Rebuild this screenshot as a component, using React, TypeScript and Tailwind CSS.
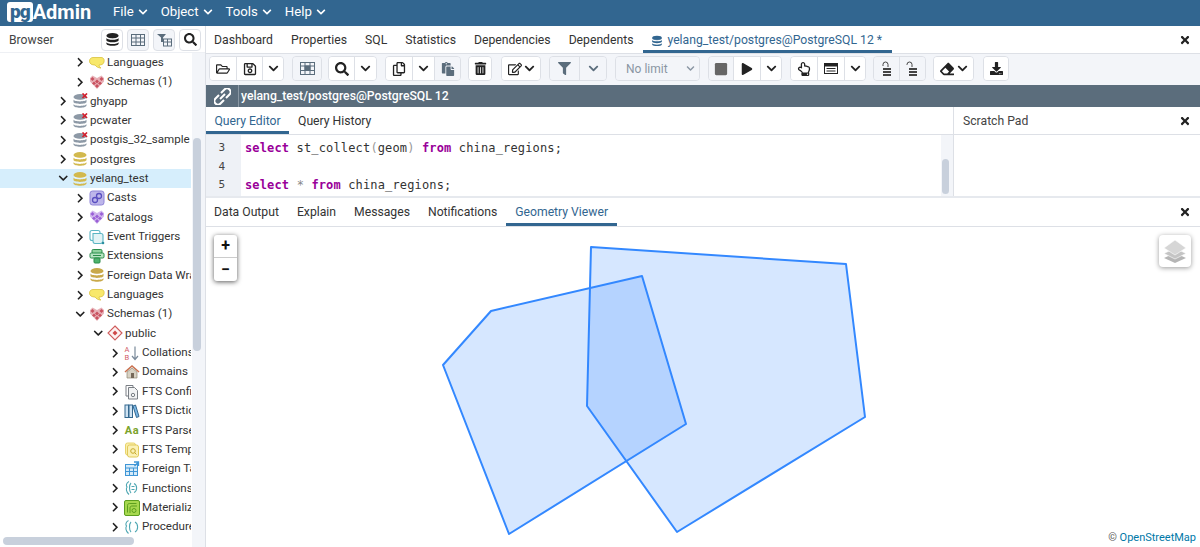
import React from 'react';
import {
    FaChevronDown, FaChevronRight, FaRegFolderOpen, FaRegSave, FaSearch, FaRegCopy, FaPaste, FaTrashAlt,
    FaRegEdit, FaFilter, FaStop, FaPlay, FaRegHandPointUp, FaEraser, FaDownload, FaTimes,
} from 'react-icons/fa';

const DbIcon = ({ color = '#c9b458', line = '#fff', off = false, size = 16 }: { color?: string; line?: string; off?: boolean; size?: number }) => (
    <svg width={size} height={size} viewBox="0 0 16 16">
        <ellipse cx="8" cy="4" rx="6.5" ry="3" fill={color} />
        <path d="M1.5 6.5C2 9 14 9 14.5 6.5V9C14 11.5 2 11.5 1.5 9Z" fill={color} />
        <path d="M1.5 11C2 13.5 14 13.5 14.5 11V12.5C14 15.5 2 15.5 1.5 12.5Z" fill={color} />
        <path d="M2 6C4 7.5 12 7.5 14 6" stroke={line} fill="none" strokeWidth="0.5" />
        {off && <path d="M10.5 0.5L15 5M15 0.5L10.5 5" stroke="#d3212f" strokeWidth="1.7" />}
    </svg>
);

const HeartIcon = ({ color }: { color: string }) => (
    <svg width="16" height="16" viewBox="0 0 16 16">
        <path d="M8 15L1 7.5 1 4 3.5 1.5 8 4 12.5 1.5 15 4 15 7.5Z" fill={color} opacity="0.45" />
        <path d="M3.5 3L5.5 5 3.5 7 1.5 5ZM12.5 3L14.5 5 12.5 7 10.5 5ZM8 5.5L10 7.5 8 9.5 6 7.5ZM5 7.5L7 9.5 5 11 3 9.5ZM11 7.5L13 9.5 11 11 9 9.5ZM8 10L10 12 8 14 6 12Z" fill={color} />
    </svg>
);

const Icons: Record<string, React.ReactNode> = {
    lang: (
        <svg width="16" height="16" viewBox="0 0 16 16">
            <path d="M4 2.5H12C15 2.5 15.5 5 15 7 14.5 9.5 12 10 10 10 10 11 11 12.5 12 13 9 13 7 11.5 6 10 3 10 .5 9 .5 6 .5 4 2 2.5 4 2.5Z" fill="#f8e86b" stroke="#d9c23c" strokeWidth="0.8" />
        </svg>
    ),
    schema: <HeartIcon color="#c9515f" />,
    catalog: <HeartIcon color="#9a5fd6" />,
    casts: (
        <svg width="16" height="16" viewBox="0 0 16 16">
            <rect x="1" y="1" width="14" height="14" rx="2.5" fill="#bdb6ea" stroke="#8f84d8" />
            <circle cx="6" cy="10" r="2.5" fill="none" stroke="#5a4fc0" strokeWidth="1.3" />
            <circle cx="10" cy="6" r="2.5" fill="none" stroke="#5a4fc0" strokeWidth="1.3" />
        </svg>
    ),
    trigger: (
        <svg width="16" height="16" viewBox="0 0 16 16" fill="none" stroke="#5cb6c4" strokeWidth="1.1">
            <rect x="1" y="1.5" width="10" height="10" rx="2" />
            <path d="M4 4.5H12C13.5 4.5 14 5.5 14 6.5V12C14 13.5 13 14.5 11.5 14.5H6C4.5 14.5 4 13.5 4 12Z" fill="#e2f3f5" />
            <circle cx="14" cy="14" r="1.3" fill="#2c8fa0" stroke="none" />
        </svg>
    ),
    ext: (
        <svg width="16" height="16" viewBox="0 0 16 16">
            <rect x="3" y="1.5" width="10" height="4" rx="1.2" fill="#8fd19e" stroke="#2a8c4a" />
            <rect x="1" y="5" width="14" height="5" rx="1.2" fill="#b7e4c2" stroke="#2a8c4a" />
            <rect x="5" y="10" width="6" height="5" rx="1" fill="#4fb36d" stroke="#2a8c4a" />
            <path d="M4 7.5H12" stroke="#2a8c4a" />
        </svg>
    ),
    fdw: <DbIcon color="#c9a94a" />,
    pub: (
        <svg width="16" height="16" viewBox="0 0 16 16">
            <path d="M8 1L15 8 8 15 1 8Z" fill="#fdf1f1" stroke="#cf5b5b" strokeWidth="1.1" />
            <path d="M8 5.5L10.5 8 8 10.5 5.5 8Z" fill="#cf4848" />
        </svg>
    ),
    coll: (
        <svg width="16" height="16" viewBox="0 0 16 16" fill="none">
            <text x="0.5" y="7" fontSize="7.5" fontFamily="Roboto, sans-serif" fill="#d1606a">A</text>
            <text x="0.5" y="15" fontSize="7.5" fontFamily="Roboto, sans-serif" fill="#d1606a">B</text>
            <path d="M11 1.5V14M8 11L11 14.5 14 11" stroke="#7a8a9a" strokeWidth="1.2" />
        </svg>
    ),
    domain: (
        <svg width="16" height="16" viewBox="0 0 16 16">
            <path d="M1 8L8 2 15 8" fill="none" stroke="#c9704e" strokeWidth="1.6" />
            <path d="M3 8L8 4 13 8V14H3Z" fill="#d8d2c4" stroke="#8f8672" strokeWidth="0.7" />
            <rect x="7" y="9" width="3" height="5" fill="#76695a" />
        </svg>
    ),
    ftsconf: (
        <svg width="16" height="16" viewBox="0 0 16 16" fill="none" stroke="#7a7f85">
            <path d="M2 1.5H9V3" />
            <path d="M2 1.5V12H4" />
            <path d="M4.5 3.5H10.5L13.5 6.5V15H4.5Z" fill="#f1f2f3" />
            <circle cx="9" cy="11" r="1.7" />
        </svg>
    ),
    ftsdict: (
        <svg width="16" height="16" viewBox="0 0 16 16">
            <rect x="1" y="2" width="3.5" height="12.5" fill="#cfe3f3" stroke="#34688f" />
            <rect x="5" y="2" width="3.5" height="12.5" fill="#cfe3f3" stroke="#34688f" />
            <path d="M9 3L11.5 2 15 13.5 12.5 14.5Z" fill="#7cb8e6" stroke="#34688f" />
        </svg>
    ),
    ftsparse: <span className="text-[11px] font-bold leading-none text-[#7ba32b] whitespace-nowrap tracking-[0.5px]">Aa</span>,
    ftstemp: (
        <svg width="16" height="16" viewBox="0 0 16 16" fill="none">
            <rect x="1.5" y="1" width="10" height="12" rx="2" fill="#fbeeaa" stroke="#e8d46c" />
            <rect x="3.5" y="3" width="11" height="12" rx="2" fill="#fbf1b5" stroke="#e0c95a" />
            <circle cx="9" cy="9" r="2.3" stroke="#c6a92c" />
            <path d="M10.7 10.7L12.5 12.5" stroke="#c6a92c" />
        </svg>
    ),
    foreign: (
        <svg width="16" height="16" viewBox="0 0 16 16" fill="none" stroke="#3f96d6">
            <rect x="1.5" y="3.5" width="12" height="11" fill="#d6ebf9" />
            <path d="M1.5 7H13.5M1.5 10.5H13.5M5.5 7V14.5M9.5 7V14.5" />
            <path d="M10 1L14.5 1V5M14.5 1L10.5 5" strokeWidth="1.3" />
        </svg>
    ),
    func: (
        <svg width="16" height="16" viewBox="0 0 16 16" fill="none" stroke="#4fa7b3" strokeWidth="1.1">
            <path d="M5 1.5C2 3 2 6 3 7 2 8.5 2 12 5 14.5" />
            <path d="M7 3C5 5 5 11 7 13" />
            <path d="M10 3.5C13.5 5 13.5 11 10 12.5" />
            <path d="M7.5 6.5H10.5M7.5 9.5H10.5" />
        </svg>
    ),
    mat: (
        <svg width="16" height="16" viewBox="0 0 16 16" fill="none" stroke="#5d9e1f">
            <rect x="0.5" y="0.5" width="15" height="15" rx="1.5" fill="#a7d84e" />
            <path d="M3.5 12.5V5.5C3.5 4 4.5 3.5 5.5 3.5H12.5" />
            <path d="M6 13V8C6 6.5 7 6 8 6H13" />
            <circle cx="10" cy="10.5" r="2" />
        </svg>
    ),
    proc: (
        <svg width="16" height="16" viewBox="0 0 16 16" fill="none" stroke="#4fa7b3" strokeWidth="1.1">
            <path d="M4.5 1.5C1.5 3 1.5 6 2.5 7 1.5 8.5 1.5 12 4.5 14.5" />
            <path d="M7 3C5 5 5 11 7 13" />
            <path d="M11 3C14.5 5 14.5 11 11 13" />
        </svg>
    ),
};

type TreeRow = { label: string; indent: number; icon: React.ReactNode; open?: boolean; selected?: boolean };

const dbOff = <DbIcon color="#8d99a6" off />;
const db = <DbIcon color="#d2b94e" />;

const treeRows: TreeRow[] = [
    { label: 'Languages', indent: 73, icon: Icons.lang },
    { label: 'Schemas (1)', indent: 73, icon: Icons.schema },
    { label: 'ghyapp', indent: 56, icon: dbOff },
    { label: 'pcwater', indent: 56, icon: dbOff },
    { label: 'postgis_32_sample', indent: 56, icon: dbOff },
    { label: 'postgres', indent: 56, icon: db },
    { label: 'yelang_test', indent: 56, icon: db, open: true, selected: true },
    { label: 'Casts', indent: 73, icon: Icons.casts },
    { label: 'Catalogs', indent: 73, icon: Icons.catalog },
    { label: 'Event Triggers', indent: 73, icon: Icons.trigger },
    { label: 'Extensions', indent: 73, icon: Icons.ext },
    { label: 'Foreign Data Wrappers', indent: 73, icon: Icons.fdw },
    { label: 'Languages', indent: 73, icon: Icons.lang },
    { label: 'Schemas (1)', indent: 73, icon: Icons.schema, open: true },
    { label: 'public', indent: 91, icon: Icons.pub, open: true },
    { label: 'Collations', indent: 108, icon: Icons.coll },
    { label: 'Domains', indent: 108, icon: Icons.domain },
    { label: 'FTS Configurations', indent: 108, icon: Icons.ftsconf },
    { label: 'FTS Dictionaries', indent: 108, icon: Icons.ftsdict },
    { label: 'FTS Parsers', indent: 108, icon: Icons.ftsparse },
    { label: 'FTS Templates', indent: 108, icon: Icons.ftstemp },
    { label: 'Foreign Tables', indent: 108, icon: Icons.foreign },
    { label: 'Functions', indent: 108, icon: Icons.func },
    { label: 'Materialized Views', indent: 108, icon: Icons.mat },
    { label: 'Procedures', indent: 108, icon: Icons.proc },
];

const Tool = ({ w, children, off, last }: { w: number; children: React.ReactNode; off?: boolean; last?: boolean }) => (
    <div
        style={{ width: w }}
        className={`flex h-full items-center justify-center text-[14px] ${last ? '' : 'border-r border-[#dde0e6]'} ${off ? 'bg-[#f3f5f9] text-[#5b6d7c]' : 'bg-white text-[#222]'}`}
    >
        {children}
    </div>
);

const Group = ({ children, ml }: { children: React.ReactNode; ml: number }) => (
    <div style={{ marginLeft: ml }} className="flex h-[25px] shrink-0 overflow-hidden rounded-[4px] border border-[#dde0e6]">
        {children}
    </div>
);

const Chev = () => <FaChevronDown className="text-[11px]" />;

const BrowserBtn = ({ children, active }: { children: React.ReactNode; active?: boolean }) => (
    <div className={`flex h-[22px] w-[22px] items-center justify-center rounded-[4px] border border-[#dde0e6] ${active ? 'bg-white text-[#222]' : 'bg-[#f3f5f9] text-[#5b6d7c]'}`}>
        {children}
    </div>
);

const Kw = ({ children }: { children: React.ReactNode }) => <span className="font-bold text-[#990099]">{children}</span>;

export default function App() {
    return (
        <div className="flex h-[547px] w-[1200px] flex-col overflow-hidden bg-white font-['Roboto',sans-serif] text-[12.2px] text-[#222]">
            {/* Top menu */}
            <div className="flex h-[26px] shrink-0 items-center bg-[#326690] pb-[2px] text-[13.2px] text-white">
                <div className="ml-[7px] flex w-[106px] items-center">
                    <span className="rounded-[3px] bg-white px-[3px] text-[19px] font-black leading-[20px] tracking-[-1px] text-[#326690]">pg</span>
                    <span className="text-[20px] font-bold leading-none">Admin</span>
                </div>
                <div className="flex items-center gap-[4px]">File <FaChevronDown className="text-[10px]" /></div>
                <div className="ml-[13px] flex items-center gap-[4px]">Object <FaChevronDown className="text-[10px]" /></div>
                <div className="ml-[13px] flex items-center gap-[4px]">Tools <FaChevronDown className="text-[10px]" /></div>
                <div className="ml-[13px] flex items-center gap-[4px]">Help <FaChevronDown className="text-[10px]" /></div>
            </div>

            <div className="flex min-h-0 flex-1">
                {/* Browser panel */}
                <div className="flex w-[206px] shrink-0 flex-col border-r border-[#dde0e6]">
                    <div className="flex h-[27px] shrink-0 items-center border-b border-[#eef0f4] pl-[9px] pr-[4px]">
                        <span className="flex-1 pt-[2px] text-[#444]">Browser</span>
                        <div className="flex gap-[4px] pt-[1px]">
                            <BrowserBtn active><DbIcon color="#222" size={15} /></BrowserBtn>
                            <BrowserBtn>
                                <svg width="14" height="12" viewBox="0 0 14 12" fill="none" stroke="#5b6d7c"><rect x=".5" y=".5" width="13" height="11" /><path d="M.5 4H13.5M.5 8H13.5M5 .5V11.5M9.5 .5V11.5" /></svg>
                            </BrowserBtn>
                            <BrowserBtn>
                                <svg width="15" height="14" viewBox="0 0 15 14" fill="#5b6d7c"><path d="M0 1H9L6 4.5V9H4V4.5Z" /><rect x="6.5" y="6" width="8" height="7" fill="none" stroke="#5b6d7c" /><path d="M6.5 9H14.5M10.5 6V13" stroke="#5b6d7c" /></svg>
                            </BrowserBtn>
                            <BrowserBtn active><FaSearch className="text-[13px]" /></BrowserBtn>
                        </div>
                    </div>
                    <div className="flex min-h-0 flex-1 bg-white">
                        <div className="flex w-[191px] shrink-0 flex-col overflow-hidden">
                            <div className="h-[482px] shrink-0 overflow-hidden">
                                {treeRows.map((r, i) => (
                                    <div
                                        key={i}
                                        style={{ paddingLeft: r.indent }}
                                        className={`flex h-[19.35px] items-center whitespace-nowrap text-[11.6px] text-[#333] ${r.selected ? 'bg-[#d6eefc]' : ''}`}
                                    >
                                        <span className="flex w-[14px] shrink-0 items-center justify-center text-[10.5px] text-[#222]">
                                            {r.open ? <FaChevronDown /> : <FaChevronRight />}
                                        </span>
                                        <span className="ml-[2px] flex w-[16px] shrink-0 items-center justify-center">{r.icon}</span>
                                        <span className="ml-[2px]">{r.label}</span>
                                    </div>
                                ))}
                            </div>
                            <div className="ml-[3px] mt-[2px] h-[8px] w-[131px] rounded-full bg-[#c8d0dc]" />
                        </div>
                        <div className="ml-[1px] flex-1 bg-[#f3f5f9]">
                            <div className="ml-[1px] mt-[85px] h-[213px] w-[8px] rounded-full bg-[#c8d0dc]" />
                        </div>
                    </div>
                </div>

                {/* Main area */}
                <div className="flex min-w-0 flex-1 flex-col">
                    <div className="flex h-[28px] shrink-0 items-center border-b border-[#dde0e6] pl-[8px] pr-[9px] text-[#333]">
                        <div className="flex h-full flex-1 items-center gap-[18px] whitespace-nowrap pt-[2px]">
                            <span>Dashboard</span>
                            <span>Properties</span>
                            <span>SQL</span>
                            <span>Statistics</span>
                            <span>Dependencies</span>
                            <span>Dependents</span>
                            <span className="-ml-[8px] flex h-full w-[249px] items-center gap-[4px] border-b-[3px] border-[#326690] pl-[8px] pt-[3px] text-[#326690]">
                                <DbIcon color="#326690" size={12} /> yelang_test/postgres@PostgreSQL 12 *
                            </span>
                        </div>
                        <FaTimes className="text-[12px] text-[#222]" />
                    </div>

                    {/* Query toolbar */}
                    <div className="flex h-[31px] shrink-0 items-start bg-[#f3f5f9] pt-[2px]">
                        <Group ml={3}>
                            <Tool w={27}><FaRegFolderOpen /></Tool>
                            <Tool w={26}><FaRegSave /></Tool>
                            <Tool w={20} last><Chev /></Tool>
                        </Group>
                        <Group ml={8}>
                            <Tool w={28} off last>
                                <svg width="15" height="13" viewBox="0 0 15 13" fill="none" stroke="#5b6d7c"><rect x=".5" y=".5" width="14" height="12" /><path d="M.5 4H14.5M.5 8.5H14.5M5 .5V12.5M10 .5V12.5" /><rect x="5" y="4" width="5" height="4.5" fill="#5b6d7c" /></svg>
                            </Tool>
                        </Group>
                        <Group ml={6}>
                            <Tool w={26}><FaSearch /></Tool>
                            <Tool w={21} last><Chev /></Tool>
                        </Group>
                        <Group ml={8}>
                            <Tool w={27}><FaRegCopy /></Tool>
                            <Tool w={22}><Chev /></Tool>
                            <Tool w={25} off last><FaPaste /></Tool>
                        </Group>
                        <Group ml={7}>
                            <Tool w={22} last><FaTrashAlt className="text-[13px]" /></Tool>
                        </Group>
                        <Group ml={9}>
                            <Tool w={38} last><span className="flex items-center gap-[2px]"><FaRegEdit /><Chev /></span></Tool>
                        </Group>
                        <Group ml={8}>
                            <Tool w={30} off><FaFilter className="text-[13px]" /></Tool>
                            <Tool w={26} off last><Chev /></Tool>
                        </Group>
                        <Group ml={8}>
                            <Tool w={83} off last>
                                <span className="flex w-full items-center justify-between pl-[10px] pr-[4px] text-[12px] text-[#8a96a3]">No limit <FaChevronDown className="text-[9px]" /></span>
                            </Tool>
                        </Group>
                        <Group ml={8}>
                            <Tool w={25} off><FaStop className="text-[#666]" /></Tool>
                            <Tool w={27}><FaPlay className="text-[12px]" /></Tool>
                            <Tool w={20} last><Chev /></Tool>
                        </Group>
                        <Group ml={8}>
                            <Tool w={27}><FaRegHandPointUp /></Tool>
                            <Tool w={27}>
                                <svg width="14" height="11" viewBox="0 0 14 11" fill="none" stroke="#222"><rect x=".5" y=".5" width="13" height="10" /><rect x=".5" y=".5" width="13" height="2.5" fill="#222" /><path d="M2.5 5.5H11.5M2.5 8H11.5" /></svg>
                            </Tool>
                            <Tool w={20} last><Chev /></Tool>
                        </Group>
                        <Group ml={7}>
                            <Tool w={26} off>
                                <svg width="14" height="16" viewBox="0 0 14 16" fill="none" stroke="#444"><path d="M3 5V3.5A2.5 2.5 0 0 1 8 3.5V6" /><path d="M3 8H11M3 11H11M3 14H11" strokeWidth="2" /></svg>
                            </Tool>
                            <Tool w={25} off last>
                                <svg width="14" height="16" viewBox="0 0 14 16" fill="none" stroke="#444"><path d="M1 4V3.5A2.5 2.5 0 0 1 6 3.5V6" /><path d="M3 8H11M3 11H11M3 14H11" strokeWidth="2" /></svg>
                            </Tool>
                        </Group>
                        <Group ml={7}>
                            <Tool w={39} last><span className="flex items-center gap-[3px]"><FaEraser /><Chev /></span></Tool>
                        </Group>
                        <Group ml={9}>
                            <Tool w={24} last><FaDownload className="text-[13px]" /></Tool>
                        </Group>
                    </div>

                    {/* Connection bar */}
                    <div className="flex h-[22px] shrink-0 items-center bg-[#5b6d7c] font-medium text-white">
                        <div className="flex h-full w-[33px] items-center justify-center border-r border-[#8a98a4]">
                            <svg width="17" height="17" viewBox="0 0 17 17" fill="none" stroke="#fff" strokeWidth="2"><path d="M7 5L10.5 1.5A2.5 2.5 0 0 1 15.5 6.5L12 10" /><path d="M10 12L6.5 15.5A2.5 2.5 0 0 1 1.5 10.5L5 7" /><path d="M6 11L11 6" /></svg>
                        </div>
                        <span className="ml-[2px] text-[12.2px]">yelang_test/postgres@PostgreSQL 12</span>
                    </div>

                    {/* Editor + scratch pad */}
                    <div className="flex h-[91px] shrink-0 border-b-2 border-[#e6e9ee]">
                        <div className="flex min-w-0 flex-1 flex-col">
                            <div className="flex h-[28px] shrink-0 items-center border-b border-[#dde0e6] pt-[1px] text-[#333]">
                                <span className="flex h-full w-[83px] items-center justify-center border-b-[3px] border-[#326690] pt-[3px] text-[#326690]">Query Editor</span>
                                <span className="ml-[9px]">Query History</span>
                            </div>
                            <div className="flex min-h-0 flex-1">
                                <div className="flex w-[35px] shrink-0 flex-col bg-[#eef1f6] pt-[4px] pr-[16px] text-right font-['DejaVu_Sans_Mono',monospace] text-[11px] leading-[18.5px] text-[#444]">
                                    <span>3</span>
                                    <span>4</span>
                                    <span>5</span>
                                </div>
                                <div className="flex-1 whitespace-pre pl-[4px] pt-[4px] font-['DejaVu_Sans_Mono',monospace] text-[12px] leading-[18.5px] tracking-[0.15px] text-[#333]">
                                    <div><Kw>select</Kw> st_collect<span className="text-[#999]">(</span>geom<span className="text-[#999]">)</span> <Kw>from</Kw> china_regions;</div>
                                    <div>&nbsp;</div>
                                    <div><Kw>select</Kw> <span className="text-[#888]">*</span> <Kw>from</Kw> china_regions;</div>
                                </div>
                                <div className="w-[12px] shrink-0 bg-[#f3f5f9]">
                                    <div className="ml-[1px] mt-[24px] h-[35px] w-[7px] rounded-full bg-[#c8d0dc]" />
                                </div>
                            </div>
                        </div>
                        <div className="flex w-[247px] shrink-0 flex-col border-l border-[#dde0e6]">
                            <div className="flex h-[28px] shrink-0 items-center justify-between border-b border-[#dde0e6] pl-[9px] pr-[9px] pt-[1px] text-[#444]">
                                <span>Scratch Pad</span>
                                <FaTimes className="text-[12px] text-[#222]" />
                            </div>
                        </div>
                    </div>

                    {/* Results tabs */}
                    <div className="flex h-[29px] shrink-0 items-center border-b border-[#dde0e6] pl-[8px] pr-[9px] text-[#333]">
                        <div className="flex h-full flex-1 items-center gap-[18px]">
                            <span>Data Output</span>
                            <span>Explain</span>
                            <span>Messages</span>
                            <span>Notifications</span>
                            <span className="-mx-[9px] flex h-full items-center border-b-[3px] border-[#326690] px-[9px] pt-[3px] text-[#326690]">Geometry Viewer</span>
                        </div>
                        <FaTimes className="text-[12px] text-[#222]" />
                    </div>

                    {/* Map */}
                    <div className="relative min-h-0 flex-1 overflow-hidden bg-white">
                        <svg className="absolute left-0 top-0" width="994" height="320" viewBox="206 227 994 320">
                            <polygon points="591,247 846,264 865,417 677,532 587,406" fill="#3388ff" fillOpacity="0.2" stroke="#3388ff" strokeWidth="2" strokeLinejoin="round" />
                            <polygon points="443,365 491,311 642,276 686,424 509,534" fill="#3388ff" fillOpacity="0.2" stroke="#3388ff" strokeWidth="2" strokeLinejoin="round" />
                        </svg>
                        <div className="absolute left-[8px] top-[8px] flex w-[23px] flex-col overflow-hidden rounded-[3px] bg-white text-[#111] shadow-[0_1px_5px_rgba(0,0,0,0.65)]">
                            <div className="flex h-[23px] items-center justify-center overflow-hidden border-b border-[#ccc] text-[16px] font-bold leading-none">+</div>
                            <div className="flex h-[23px] items-center justify-center overflow-hidden text-[16px] font-bold leading-none">−</div>
                        </div>
                        <div className="absolute left-[953px] top-[8px] flex h-[32px] w-[32px] items-center justify-center rounded-[4px] bg-white shadow-[0_1px_5px_rgba(0,0,0,0.4)]">
                            <svg width="24" height="24" viewBox="0 0 24 24">
                                <path d="M12 14L1 19 12 24 23 19Z" fill="#b5b5b5" />
                                <path d="M12 9L1 14.5 12 20 23 14.5Z" fill="#c4c4c4" stroke="#fff" strokeWidth="0.6" />
                                <path d="M12 1L1 9 12 16 23 9Z" fill="#d6d6d6" stroke="#fff" strokeWidth="0.6" />
                            </svg>
                        </div>
                        <div className="absolute bottom-[1px] right-[4px] text-[11px] text-[#555]">
                            © <span className="text-[#0078a8]">OpenStreetMap</span>
                        </div>
                    </div>
                </div>
            </div>
        </div>
    );
}
